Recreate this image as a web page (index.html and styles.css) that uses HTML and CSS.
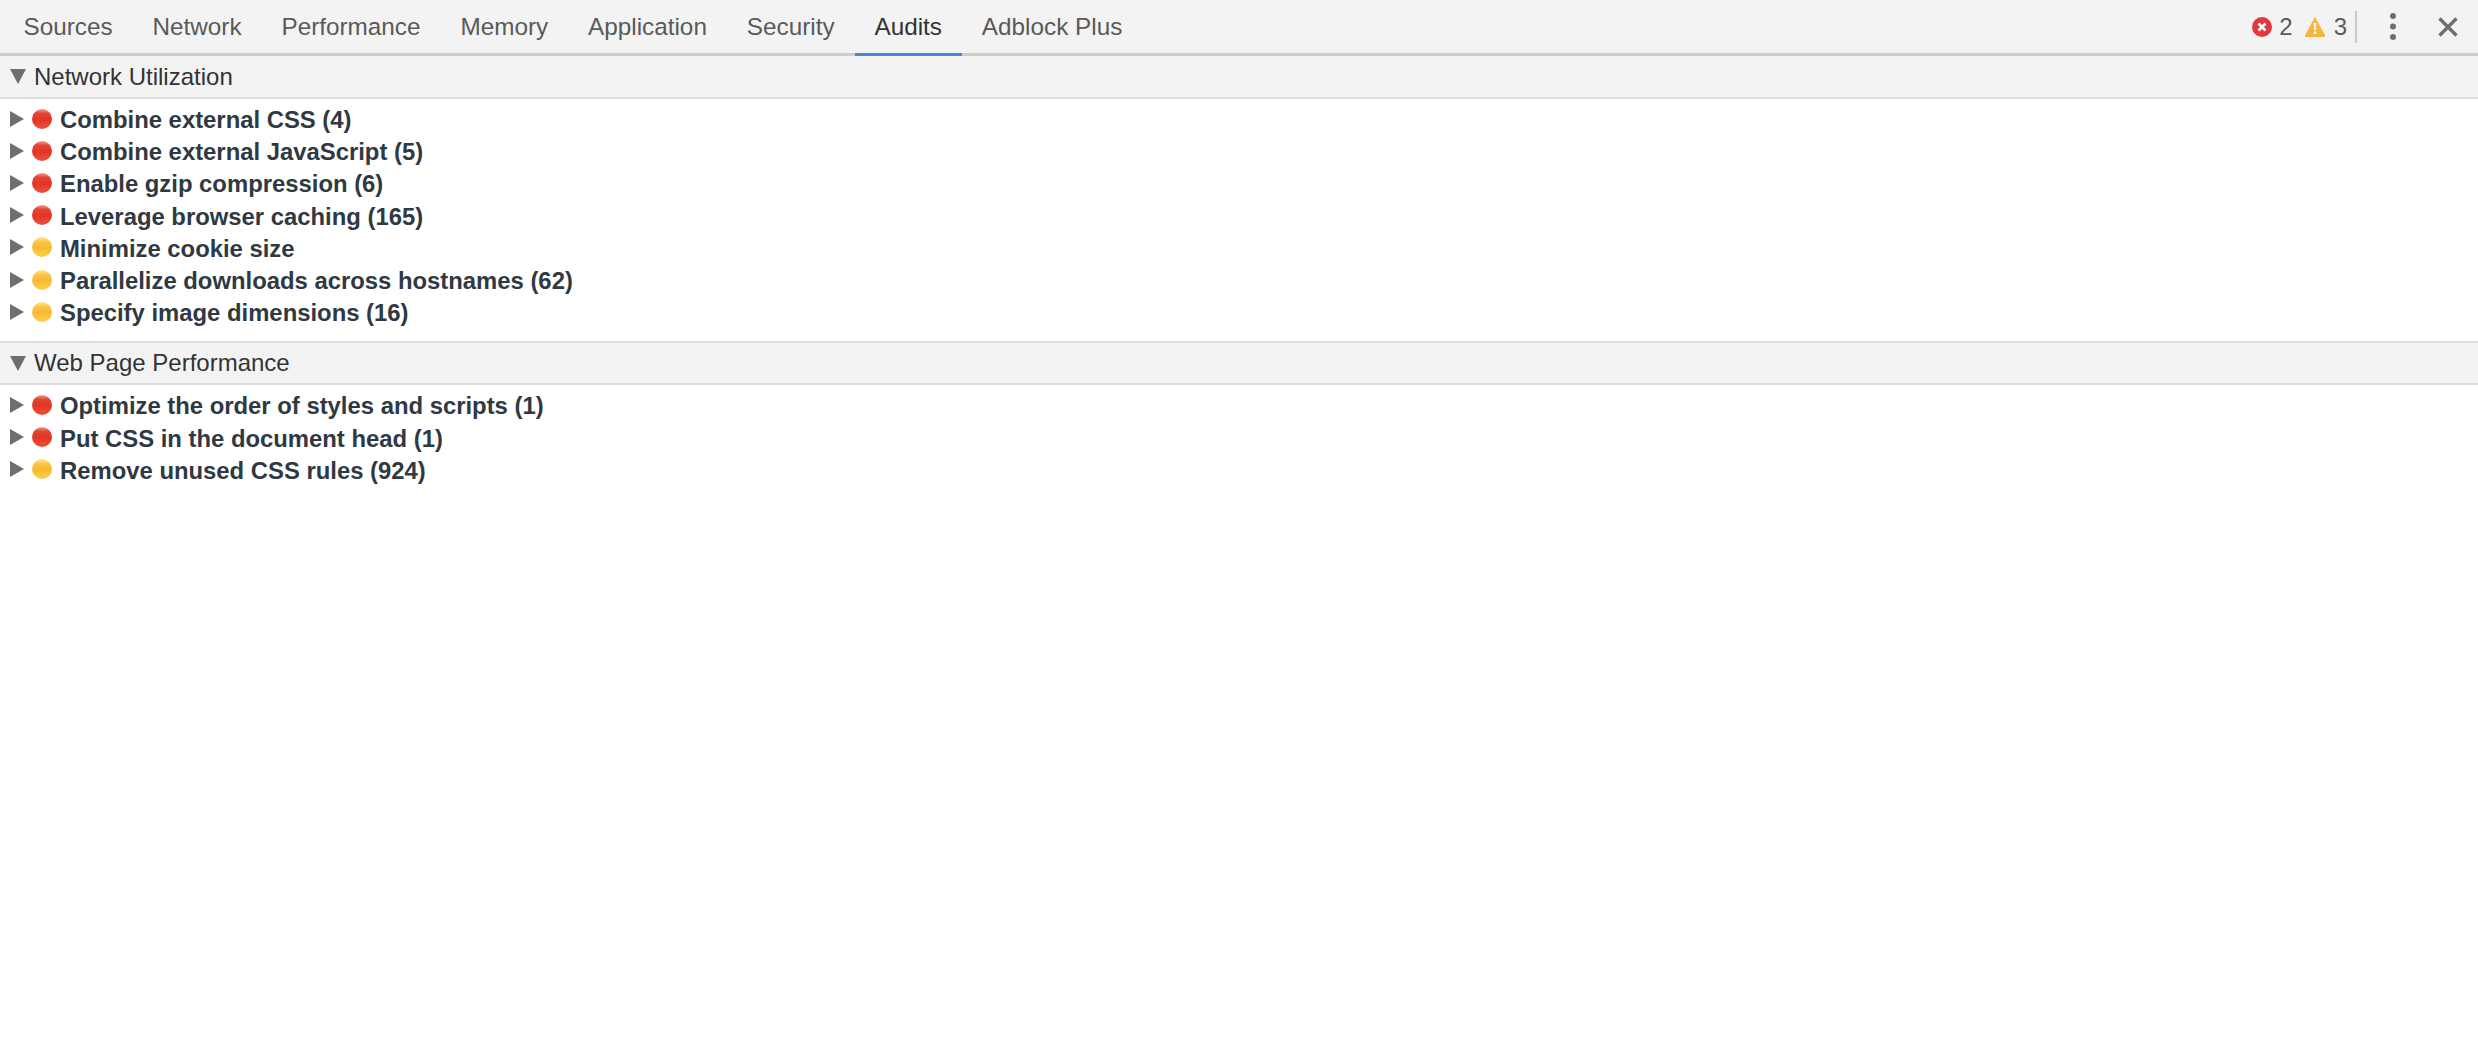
FILE: index.html
```html
<!DOCTYPE html>
<html lang="en">
<head>
<meta charset="utf-8">
<title>Audits</title>
<link rel="stylesheet" href="styles.css">
</head>
<body>
<header class="tabbar">
  <nav class="tabs">
    <span class="tab">Sources</span>
    <span class="tab">Network</span>
    <span class="tab">Performance</span>
    <span class="tab">Memory</span>
    <span class="tab">Application</span>
    <span class="tab">Security</span>
    <span class="tab active">Audits</span>
    <span class="tab">Adblock Plus</span>
  </nav>
  <div class="status">
    <svg class="ico" viewBox="0 0 20 20"><circle cx="10" cy="10" r="10" fill="#e0383e"/><path d="M6.500 6.500l7 7M13.500 6.500l-7 7" stroke="#fff" stroke-width="2.600" fill="none"/></svg>
    <span class="count c1">2</span>
    <svg class="ico" viewBox="0 0 20 20"><path d="M10 0.500L20 19.500H0z" fill="#f4b63f" stroke="#f4b63f" stroke-linejoin="round"/><path d="M8.700 6h2.600l-.5 7H9.200z" fill="#fff"/><rect x="8.800" y="14.500" width="2.400" height="2.400" fill="#fff"/></svg>
    <span class="count c2">3</span>
    <span class="sep"></span>
    <svg class="dots" viewBox="0 0 6 27"><circle cx="3" cy="3" r="3"/><circle cx="3" cy="13.500" r="3"/><circle cx="3" cy="24" r="3"/></svg>
    <svg class="close" viewBox="0 0 20 20"><path d="M1.500 1.500l17 17M18.500 1.500l-17 17" stroke="#6e6e6e" stroke-width="3.200" fill="none"/></svg>
  </div>
</header>

<section class="group">
  <h2 class="group-head"><span class="tri-down"></span>Network Utilization</h2>
  <ul class="rules">
    <li class="rule"><span class="tri-right"></span><span class="dot red"></span><span class="name">Combine external CSS (4)</span></li>
    <li class="rule"><span class="tri-right"></span><span class="dot red"></span><span class="name">Combine external JavaScript (5)</span></li>
    <li class="rule"><span class="tri-right"></span><span class="dot red"></span><span class="name">Enable gzip compression (6)</span></li>
    <li class="rule"><span class="tri-right"></span><span class="dot red"></span><span class="name">Leverage browser caching (165)</span></li>
    <li class="rule"><span class="tri-right"></span><span class="dot yellow"></span><span class="name">Minimize cookie size</span></li>
    <li class="rule"><span class="tri-right"></span><span class="dot yellow"></span><span class="name">Parallelize downloads across hostnames (62)</span></li>
    <li class="rule"><span class="tri-right"></span><span class="dot yellow"></span><span class="name">Specify image dimensions (16)</span></li>
  </ul>
</section>

<section class="group">
  <h2 class="group-head second"><span class="tri-down"></span>Web Page Performance</h2>
  <ul class="rules">
    <li class="rule"><span class="tri-right"></span><span class="dot red"></span><span class="name">Optimize the order of styles and scripts (1)</span></li>
    <li class="rule"><span class="tri-right"></span><span class="dot red"></span><span class="name">Put CSS in the document head (1)</span></li>
    <li class="rule"><span class="tri-right"></span><span class="dot yellow"></span><span class="name">Remove unused CSS rules (924)</span></li>
  </ul>
</section>
</body>
</html>
```

FILE: styles.css
```css
* { box-sizing: border-box; }
html, body { margin: 0; padding: 0; background: #fff; }
body {
  height: 1051px;
  overflow: hidden;
  font-family: "Liberation Sans", Arial, sans-serif;
  color: #303942;
}
.tabbar {
  height: 56px;
  display: flex;
  justify-content: space-between;
  background: #f3f3f3;
  border-bottom: 3px solid #cdcdcd;
}
.tabs { display: flex; padding-left: 3.500px; }
.tab {
  height: 56px;
  padding: 0 19.950px;
  line-height: 53px;
  font-size: 24.300px;
  color: #5a5a5a;
  white-space: nowrap;
}
.tab.active {
  color: #333;
  border-bottom: 3px solid #4a80e0;
}
.status {
  display: flex;
  align-items: center;
  height: 53px;
  padding-right: 20px;
}
.ico { width: 20px; height: 20px; flex: none; }
.count { font-size: 24px; color: #5a5a5a; }
.c1 { margin: 0 12px 0 7px; }
.c2 { margin: 0 8px 0 9px; }
.sep { width: 2px; height: 32px; background: #c8c8c8; }
.dots { width: 6px; height: 27px; fill: #6e6e6e; margin-left: 33px; }
.close { width: 20px; height: 20px; margin-left: 42px; }

.group-head {
  margin: 0;
  height: 43px;
  display: flex;
  align-items: center;
  padding-left: 10px;
  font-size: 24px;
  font-weight: 400;
  line-height: 40px;
  color: #333;
  background: #f3f3f3;
  border-bottom: 2px solid #dcdcdc;
}
.group-head.second {
  height: 44px;
  border-top: 2px solid #dcdcdc;
}
.tri-down {
  width: 0;
  height: 0;
  border-left: 8px solid transparent;
  border-right: 8px solid transparent;
  border-top: 15px solid #6e6e6e;
  margin-right: 8px;
}
.rules { list-style: none; margin: 0; padding: 5px 0 12px; }
.rule {
  height: 32.200px;
  display: flex;
  align-items: center;
  padding-left: 10px;
  font-size: 23.850px;
  font-weight: 700;
  white-space: nowrap;
}
.tri-right {
  width: 0;
  height: 0;
  border-top: 8px solid transparent;
  border-bottom: 8px solid transparent;
  border-left: 14px solid #6e6e6e;
  margin: -3px 8px 0 0;
}
.dot {
  width: 20px;
  height: 20px;
  border-radius: 50%;
  margin: -3px 8px 0 0;
  flex: none;
}
.dot.red {
  background: linear-gradient(#f2a08e 0, #e5432f 22%, #e2352a 55%, #f0492f 85%, #e84a36 100%);
}
.dot.yellow {
  background: linear-gradient(#ffe58f 0, #fbc544 25%, #f8b932 55%, #ffc93f 85%, #fbcb52 100%);
}
```
